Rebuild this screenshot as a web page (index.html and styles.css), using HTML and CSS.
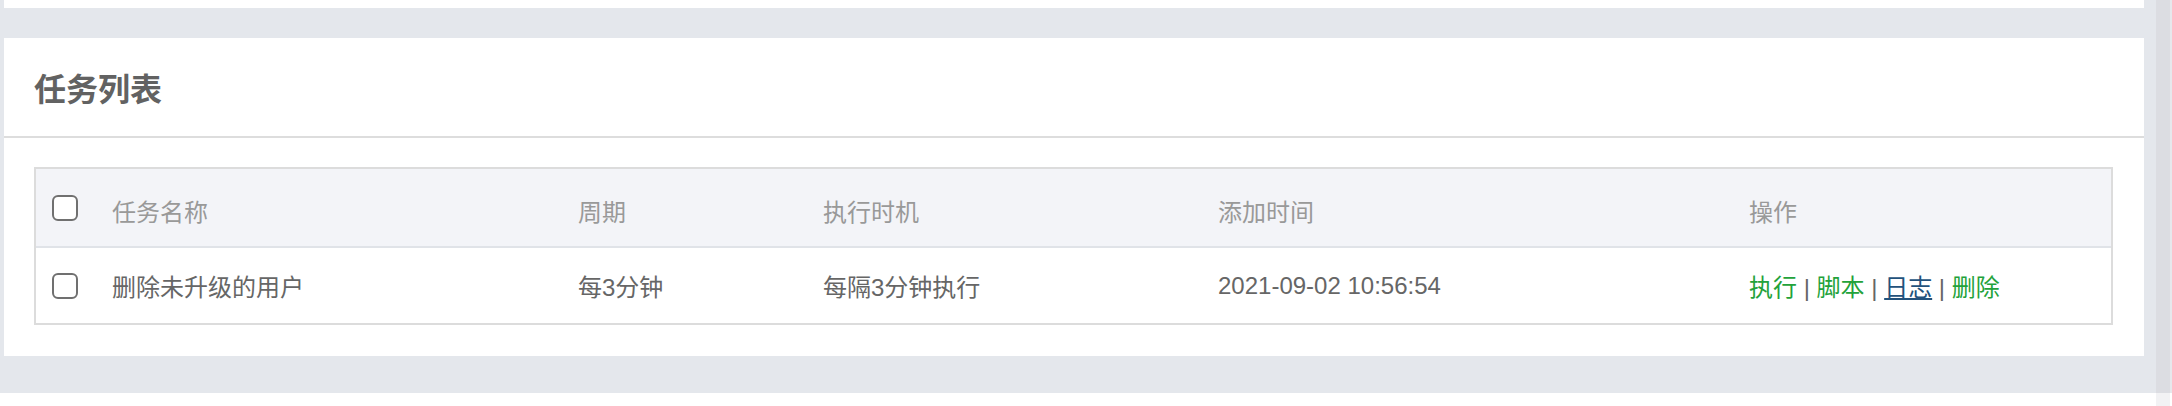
FILE: index.html
```
<!DOCTYPE html>
<html lang="zh-CN">
<head>
  <meta charset="UTF-8">
  <meta name="viewport" content="width=device-width, initial-scale=1.0">
  <title>任务列表</title>
  <link rel="stylesheet" href="styles.css">
</head>
<body>

  <div class="screen">
    <div class="page">
      <!-- bottom of the panel above -->
      <div class="card card-prev"></div>

      <!-- Task list panel -->
      <section class="card">
        <div class="card-head">
          <h2>任务列表</h2>
        </div>
        <div class="card-body">
          <table class="task-table">
            <colgroup>
              <col class="col-check">
              <col class="col-name">
              <col class="col-cycle">
              <col class="col-when">
              <col class="col-added">
              <col class="col-ops">
            </colgroup>
            <thead>
              <tr>
                <th class="cell-check"><input type="checkbox" class="check"></th>
                <th>任务名称</th>
                <th>周期</th>
                <th>执行时机</th>
                <th>添加时间</th>
                <th>操作</th>
              </tr>
            </thead>
            <tbody>
              <tr>
                <td class="cell-check"><input type="checkbox" class="check"></td>
                <td>删除未升级的用户</td>
                <td>每3分钟</td>
                <td>每隔3分钟执行</td>
                <td>2021-09-02 10:56:54</td>
                <td class="ops">
                  <a href="#" class="op">执行</a> | <a href="#" class="op">脚本</a> | <a href="#" class="op op-log">日志</a> | <a href="#" class="op">删除</a>
                </td>
              </tr>
            </tbody>
          </table>
        </div>
      </section>
    </div>
    <div class="scrollbar"></div>
  </div>

  <div class="foot">
    <div class="foot-corner"></div>
  </div>

</body>
</html>
```

FILE: styles.css
```
/* General page */
body {
  margin: 0;
  padding: 0;
  background-color: #fff;
  font-family: "Liberation Sans", "Noto Sans CJK SC", sans-serif;
  font-size: 24px;
  color: #666;
}

.screen {
  display: flex;
  height: 393px;
}

.page {
  flex: 1;
  padding: 0 12px 0 4px;
  background-color: #e4e7ec;
}

/* Scrollbar strip on the right */
.scrollbar {
  width: 14px;
  background-color: #dcdde2;
  border-right: 2px solid #e6e8ec;
}

.foot {
  display: flex;
  justify-content: flex-end;
  height: 13px;
}

.foot-corner {
  width: 14px;
  margin-right: 2px;
  background-color: #f2f2f4;
}

/* Panels */
.card {
  background-color: #fff;
}

.card-prev {
  height: 8px;
  margin-bottom: 30px;
}

.card-head {
  display: flex;
  align-items: center;
  height: 98px;
  padding-left: 30px;
  border-bottom: 2px solid #ddd;
}

.card-head h2 {
  margin: 0;
  font-size: 32px;
  font-weight: bold;
  color: #626262;
}

.card-body {
  padding: 29px 31px 31px 30px;
}

/* Table */
.task-table {
  width: 100%;
  table-layout: fixed;
  border-collapse: separate;
  border-spacing: 0;
  border: 2px solid #dcdcdc;
}

.col-check { width: 60px; }
.col-name { width: 466px; }
.col-cycle { width: 245px; }
.col-when { width: 395px; }
.col-added { width: 531px; }
.col-ops { width: 378px; }

.task-table th,
.task-table td {
  box-sizing: border-box;
  padding: 0 16px;
  text-align: left;
  vertical-align: middle;
  white-space: nowrap;
}

.task-table th {
  height: 79px;
  padding-top: 6px;
  font-weight: normal;
  color: #999;
  background-color: #f3f4f8;
  border-bottom: 2px solid #e0e3e8;
}

.task-table th.cell-check {
  padding-top: 0;
}

.task-table td {
  height: 75px;
  color: #666;
}

/* Checkboxes */
.check {
  appearance: none;
  -webkit-appearance: none;
  display: block;
  box-sizing: border-box;
  width: 26px;
  height: 26px;
  margin: 0;
  border: 2px solid #707070;
  border-radius: 6px;
  background-color: #fff;
}

/* Row actions */
.ops {
  color: #555;
}

.op {
  color: #23a23a;
  text-decoration: none;
}

.op-log {
  color: #23527c;
  text-decoration: underline;
}
```
